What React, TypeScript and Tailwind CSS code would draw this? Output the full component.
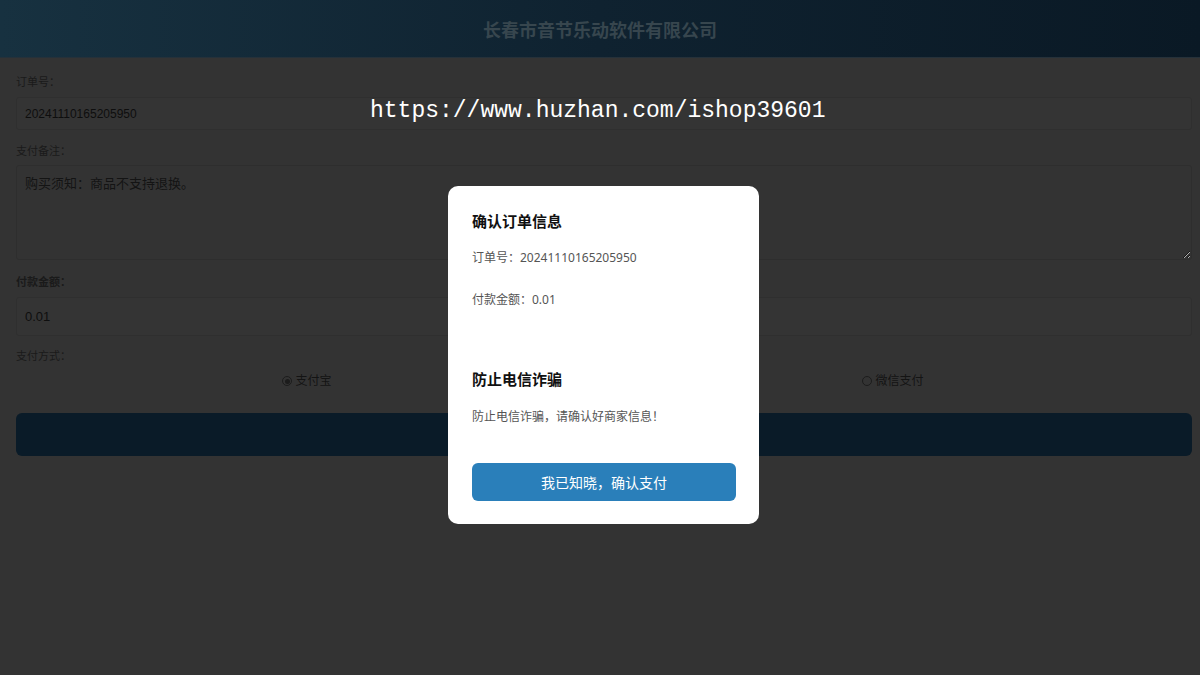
import * as React from 'react';

const sans = "font-['Liberation_Sans','Noto_Sans_CJK_SC',sans-serif]";
const cjk = "font-['Noto_Sans','Noto_Sans_CJK_SC',sans-serif]";

const Radio: React.FC<{ checked?: boolean; label: string }> = ({ checked, label }) => (
  <label className="flex items-center gap-[3px] text-[12px] text-[#141414]">
    <span className="w-[10px] h-[10px] rounded-full border border-[#1c1c1c] flex items-center justify-center">
      {checked && <span className="w-[5px] h-[5px] rounded-full bg-[#1c1c1c]" />}
    </span>
    {label}
  </label>
);

const App: React.FC = () => {
  const [method, setMethod] = React.useState('alipay');

  return (
    <div className={`relative w-[1200px] h-[675px] overflow-hidden bg-[#333333] ${sans}`}>
      {/* page under the mask */}
      <header className="h-[58px] flex items-center justify-center bg-linear-to-r from-[#173140] via-[#0f2230] to-[#0a1925] border-b border-[#25313a]">
        <h1 className={`mt-[3px] text-[18px] font-bold text-[#37464e] ${cjk}`}>长春市音节乐动软件有限公司</h1>
      </header>

      <form className="pl-4 pr-2 pt-[16px] flex flex-col" onSubmit={(e) => e.preventDefault()}>
        <label className="text-[11px] text-[#1a1a1a] leading-4">订单号：</label>
        <input
          readOnly
          value="20241110165205950"
          className="mt-[7px] h-[33px] px-[8px] text-[12px] text-[#0e0e0e] bg-[#343434] border border-[#2f2f2f] rounded-[3px] outline-none"
        />

        <label className="mt-[13px] text-[11px] text-[#1a1a1a] leading-4">支付备注：</label>
        <textarea
          readOnly
          value="购买须知：商品不支持退换。"
          className="mt-[6px] h-[95px] px-[8px] py-[8px] text-[13px] text-[#141414] bg-[#333333] border border-[#2e2e2e] rounded-[3px] outline-none resize-y font-['Liberation_Serif','Noto_Sans_CJK_SC',serif]"
        />

        <label className="mt-[14px] text-[11px] font-semibold text-[#1a1a1a] leading-4">付款金额：</label>
        <input
          readOnly
          value="0.01"
          className="mt-[7px] h-[39px] px-[8px] text-[13px] text-[#0e0e0e] bg-[#343434] border border-[#2f2f2f] rounded-[3px] outline-none"
        />

        <label className="mt-[12px] text-[11px] text-[#1a1a1a] leading-4">支付方式：</label>
        <div className="mt-[8px] flex h-[18px]">
          <div className="flex-1 flex justify-center pr-[4px]" onClick={() => setMethod('alipay')}>
            <Radio checked={method === 'alipay'} label="支付宝" />
          </div>
          <div className="flex-1 flex justify-center pr-[8px]" onClick={() => setMethod('wechat')}>
            <Radio checked={method === 'wechat'} label="微信支付" />
          </div>
        </div>

        <button type="submit" className="mt-[23px] h-[43px] rounded-[6px] bg-[#0a1b28]" />
      </form>

      {/* watermark */}
      <div className="absolute top-[94px] left-[370px] text-[23px] leading-[34px] text-white font-['Liberation_Mono',monospace] pointer-events-none">
        https://www.huzhan.com/ishop39601
      </div>

      {/* confirm dialog */}
      <div className={`absolute top-[186px] left-[448px] w-[311px] h-[338px] bg-white rounded-[10px] px-[24px] pt-[22px] ${cjk}`}>
        <h2 className="text-[15px] font-bold text-[#111] leading-[26px]">确认订单信息</h2>
        <p className="mt-[14px] text-[12px] text-[#555] leading-5">订单号：20241110165205950</p>
        <p className="mt-[22px] text-[12px] text-[#555] leading-5">付款金额：0.01</p>
        <h2 className="mt-[56px] text-[15px] font-bold text-[#111] leading-[26px]">防止电信诈骗</h2>
        <p className="mt-[15px] text-[12px] text-[#555] leading-5">防止电信诈骗，请确认好商家信息！</p>
        <button className="mt-[36px] w-[264px] h-[38px] rounded-[6px] bg-[#2a7fba] text-white text-[14px]">
          我已知晓，确认支付
        </button>
      </div>
    </div>
  );
};

export default App;
